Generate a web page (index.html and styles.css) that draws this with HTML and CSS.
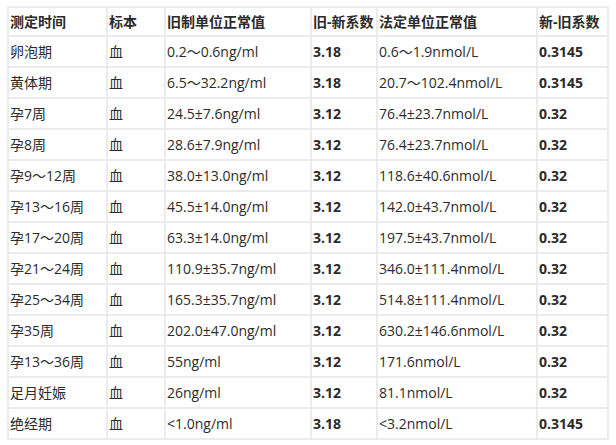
FILE: index.html
```html
<!DOCTYPE html>
<html lang="zh-CN">
<head>
<meta charset="utf-8">
<title>孕酮正常值</title>
<link rel="stylesheet" href="styles.css">
</head>
<body>
<div class="wrap">
<table class="ref">
<colgroup>
<col class="c1"><col class="c2"><col class="c3"><col class="c4"><col class="c5"><col class="c6">
</colgroup>
<thead>
<tr class="head"><th>测定时间</th><th>标本</th><th>旧制单位正常值</th><th>旧-新系数</th><th>法定单位正常值</th><th>新-旧系数</th></tr>
</thead>
<tbody>
<tr><td>卵泡期</td><td>血</td><td>0.2～0.6ng/ml</td><td class="b">3.18</td><td>0.6～1.9nmol/L</td><td class="b">0.3145</td></tr>
<tr><td>黄体期</td><td>血</td><td>6.5～32.2ng/ml</td><td class="b">3.18</td><td>20.7～102.4nmol/L</td><td class="b">0.3145</td></tr>
<tr><td>孕7周</td><td>血</td><td>24.5±7.6ng/ml</td><td class="b">3.12</td><td>76.4±23.7nmol/L</td><td class="b">0.32</td></tr>
<tr><td>孕8周</td><td>血</td><td>28.6±7.9ng/ml</td><td class="b">3.12</td><td>76.4±23.7nmol/L</td><td class="b">0.32</td></tr>
<tr><td>孕9～12周</td><td>血</td><td>38.0±13.0ng/ml</td><td class="b">3.12</td><td>118.6±40.6nmol/L</td><td class="b">0.32</td></tr>
<tr><td>孕13～16周</td><td>血</td><td>45.5±14.0ng/ml</td><td class="b">3.12</td><td>142.0±43.7nmol/L</td><td class="b">0.32</td></tr>
<tr><td>孕17～20周</td><td>血</td><td>63.3±14.0ng/ml</td><td class="b">3.12</td><td>197.5±43.7nmol/L</td><td class="b">0.32</td></tr>
<tr><td>孕21～24周</td><td>血</td><td>110.9±35.7ng/ml</td><td class="b">3.12</td><td>346.0±111.4nmol/L</td><td class="b">0.32</td></tr>
<tr><td>孕25～34周</td><td>血</td><td>165.3±35.7ng/ml</td><td class="b">3.12</td><td>514.8±111.4nmol/L</td><td class="b">0.32</td></tr>
<tr><td>孕35周</td><td>血</td><td>202.0±47.0ng/ml</td><td class="b">3.12</td><td>630.2±146.6nmol/L</td><td class="b">0.32</td></tr>
<tr><td>孕13～36周</td><td>血</td><td>55ng/ml</td><td class="b">3.12</td><td>171.6nmol/L</td><td class="b">0.32</td></tr>
<tr><td>足月妊娠</td><td>血</td><td>26ng/ml</td><td class="b">3.12</td><td>81.1nmol/L</td><td class="b">0.32</td></tr>
<tr><td>绝经期</td><td>血</td><td>&lt;1.0ng/ml</td><td class="b">3.18</td><td>&lt;3.2nmol/L</td><td class="b">0.3145</td></tr>
</tbody>
</table>
</div>
</body>
</html>
```

FILE: styles.css
```css
html, body {
  margin: 0;
  padding: 0;
  background: #ffffff;
}

.wrap {
  padding: 6px 0 0 7px;
}

.ref {
  width: 600px;
  table-layout: fixed;
  border-collapse: collapse;
  font-family: "Open Sans", "Noto Sans CJK SC", sans-serif;
  font-size: 14px;
  color: #2b2b2b;
}

.c1 { width: 99px; }
.c2 { width: 58px; }
.c3 { width: 146px; }
.c4 { width: 66px; }
.c5 { width: 160px; }
.c6 { width: 71px; }

.ref th,
.ref td {
  border: 2px solid #ebebeb;
  padding: 0 0 0 1px;
  text-align: left;
  vertical-align: middle;
  white-space: nowrap;
  line-height: 18px;
}

.ref th {
  font-weight: bold;
}

.ref .head {
  height: 29px;
}

.ref tbody tr {
  height: 31px;
}

.ref .b {
  font-weight: bold;
}
```
